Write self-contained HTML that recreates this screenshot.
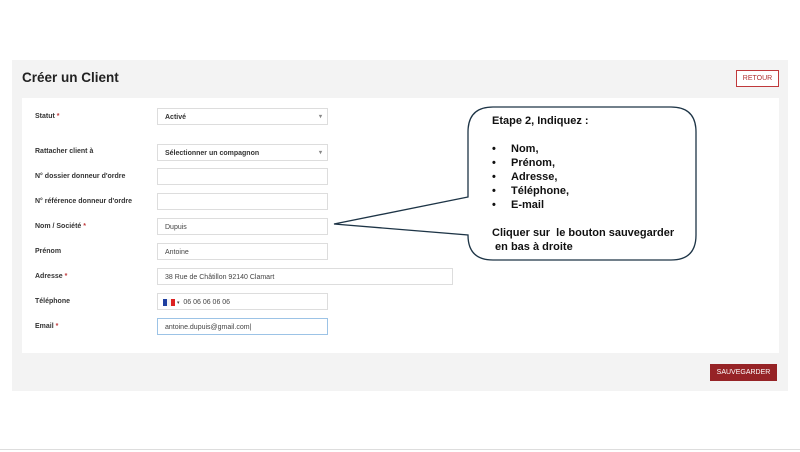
<!DOCTYPE html>
<html><head><meta charset="utf-8"><style>
*{margin:0;padding:0;box-sizing:border-box}
body{width:800px;height:452px;background:#fff;position:relative;font-family:"Liberation Sans",Arial,sans-serif;overflow:hidden}
.panel{position:absolute;left:12px;top:60px;width:776px;height:331px;background:#f3f3f3}
.card{position:absolute;left:22px;top:98px;width:757px;height:255px;background:#fff}
h1{position:absolute;left:22px;top:70px;font-size:13.5px;font-weight:bold;color:#222}
.retour{position:absolute;left:736px;top:70px;width:43px;height:17px;border:1px solid #c0393b;background:#fff;color:#b03030;font-size:7px;text-align:center;line-height:16px}
.save{position:absolute;left:710px;top:364px;width:67px;height:17px;background:#962326;color:#fff;font-size:7px;text-align:center;line-height:17px}
.lbl{position:absolute;left:35px;font-size:7px;font-weight:bold;color:#333}
.lbl i{color:#c0393b;font-style:normal}
.in{position:absolute;left:157px;width:171px;height:17px;border:1px solid #ddd;background:#fff;font-size:7px;color:#444;padding-left:7px;line-height:17px}
.sel{font-weight:bold;color:#333}
.sel:after{content:"▾";position:absolute;right:5px;top:0;font-size:6px;color:#888}
.line{position:absolute;left:0;top:449px;width:800px;height:1px;background:#ddd}
.bub{position:absolute;left:492px;top:114px;font-weight:bold;color:#111;line-height:14px;font-family:"Liberation Sans",sans-serif;font-size:11px}
.bub .b{display:flex}.bub .b span:first-child{width:19px}
</style></head><body>
<div class="panel"></div>
<div class="card"></div>
<h1>Créer un Client</h1>
<div class="retour">RETOUR</div>
<div class="save">SAUVEGARDER</div>
<div class="lbl" style="top:113px">Statut <i>*</i></div>
<div class="in sel" style="top:108px">Activé</div>
<div class="lbl" style="top:148px">Rattacher client à</div>
<div class="in sel" style="top:144px">Sélectionner un compagnon</div>
<div class="lbl" style="top:173px">N° dossier donneur d'ordre</div>
<div class="in" style="top:168px"></div>
<div class="lbl" style="top:198px">N° référence donneur d'ordre</div>
<div class="in" style="top:193px"></div>
<div class="lbl" style="top:223px">Nom / Société <i>*</i></div>
<div class="in" style="top:218px">Dupuis</div>
<div class="lbl" style="top:248px">Prénom</div>
<div class="in" style="top:243px">Antoine</div>
<div class="lbl" style="top:273px">Adresse <i>*</i></div>
<div class="in" style="top:268px;width:296px">38 Rue de Châtillon 92140 Clamart</div>
<div class="lbl" style="top:298px">Téléphone</div>
<div class="in" style="top:293px;padding-left:5px"><span style="display:inline-block;width:4px;height:7px;background:#1f3fa0;vertical-align:middle"></span><span style="display:inline-block;width:4px;height:7px;background:#f4f4f4;vertical-align:middle"></span><span style="display:inline-block;width:4px;height:7px;background:#d22;vertical-align:middle"></span> <span style="font-size:5px">▾</span>&nbsp; 06 06 06 06 06</div>
<div class="lbl" style="top:323px">Email <i>*</i></div>
<div class="in" style="top:318px;border-color:#9cc3e6">antoine.dupuis@gmail.com|</div>
<svg style="position:absolute;left:0;top:0" width="800" height="452">
<path d="M493,107 H671 Q696,107 696,132 V235 Q696,260 671,260 H493 Q468,260 468,235 L334,224 L468,197 V132 Q468,107 493,107 Z" fill="#fff" stroke="#1d3446" stroke-width="1.3"/>
</svg>
<div class="bub">
<div>Etape 2, Indiquez :</div><div>&nbsp;</div>
<div class="b"><span>•</span><span>Nom,</span></div>
<div class="b"><span>•</span><span>Prénom,</span></div>
<div class="b"><span>•</span><span>Adresse,</span></div>
<div class="b"><span>•</span><span>Téléphone,</span></div>
<div class="b"><span>•</span><span>E-mail</span></div>
<div>&nbsp;</div>
<div>Cliquer sur&nbsp; le bouton sauvegarder</div>
<div>&nbsp;en bas à droite</div>
</div>
<div class="line"></div>
</body></html>
